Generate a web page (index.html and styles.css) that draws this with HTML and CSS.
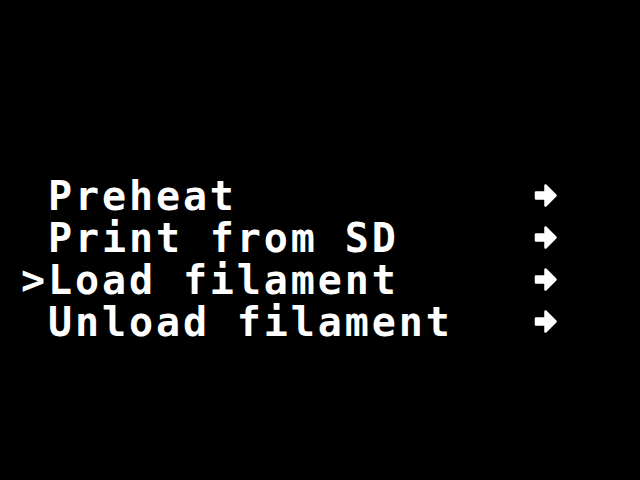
FILE: index.html
```html
<!DOCTYPE html>
<html>
<head>
<meta charset="utf-8">
<link rel="stylesheet" href="styles.css">
</head>
<body>
<div class="lcd">
  <div class="row"><span class="txt"> Preheat</span><svg class="arrow" viewBox="0 0 27 42" width="27" height="42"><path d="M2 17.5 H11.5 V10.5 L21.5 20.5 L11.5 30.5 V23.5 H2 Z"/></svg></div>
  <div class="row"><span class="txt"> Print from SD</span><svg class="arrow" viewBox="0 0 27 42" width="27" height="42"><path d="M2 17.5 H11.5 V10.5 L21.5 20.5 L11.5 30.5 V23.5 H2 Z"/></svg></div>
  <div class="row"><span class="txt">&gt;Load filament</span><svg class="arrow" viewBox="0 0 27 42" width="27" height="42"><path d="M2 17.5 H11.5 V10.5 L21.5 20.5 L11.5 30.5 V23.5 H2 Z"/></svg></div>
  <div class="row"><span class="txt"> Unload filament</span><svg class="arrow" viewBox="0 0 27 42" width="27" height="42"><path d="M2 17.5 H11.5 V10.5 L21.5 20.5 L11.5 30.5 V23.5 H2 Z"/></svg></div>
</div>
</body>
</html>
```
FILE: styles.css
```css
html, body {
  margin: 0;
  padding: 0;
  background: #000;
  width: 640px;
  height: 480px;
  overflow: hidden;
}
.lcd {
  padding-top: 175px;
  padding-left: 21px;
  display: flex;
  flex-direction: column;
}
.row {
  display: flex;
  align-items: flex-start;
  height: 42px;
}
.txt {
  flex: none;
  font-family: "DejaVu Sans Mono", monospace;
  font-weight: bold;
  font-size: 40px;
  line-height: 42px;
  letter-spacing: 2.9px;
  white-space: pre;
  color: #fff;
  width: 513px;
}
.arrow {
  display: block;
  flex: none;
}
.arrow path {
  fill: #fff;
  stroke: #fff;
  stroke-width: 2.5;
  stroke-linejoin: round;
}
```
